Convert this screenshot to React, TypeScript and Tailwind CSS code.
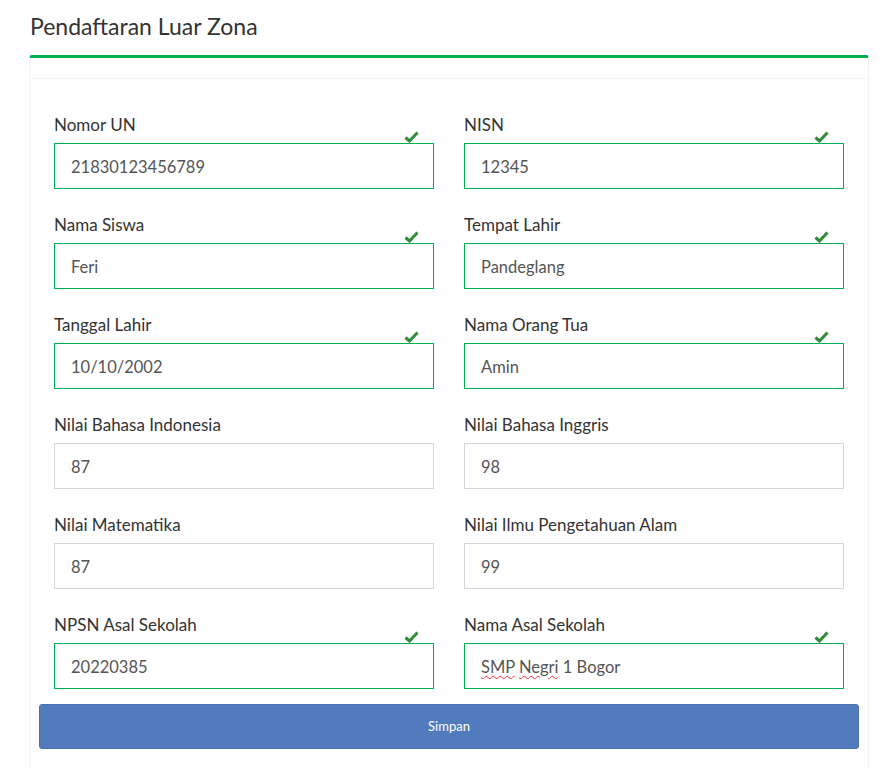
import React from "react";

type Field = {
  label: string;
  value: string;
  valid: boolean;
  spell?: boolean;
};

const fields: Field[] = [
  { label: "Nomor UN", value: "21830123456789", valid: true },
  { label: "NISN", value: "12345", valid: true },
  { label: "Nama Siswa", value: "Feri", valid: true },
  { label: "Tempat Lahir", value: "Pandeglang", valid: true },
  { label: "Tanggal Lahir", value: "10/10/2002", valid: true },
  { label: "Nama Orang Tua", value: "Amin", valid: true },
  { label: "Nilai Bahasa Indonesia", value: "87", valid: false },
  { label: "Nilai Bahasa Inggris", value: "98", valid: false },
  { label: "Nilai Matematika", value: "87", valid: false },
  { label: "Nilai Ilmu Pengetahuan Alam", value: "99", valid: false },
  { label: "NPSN Asal Sekolah", value: "20220385", valid: true },
  { label: "Nama Asal Sekolah", value: "SMP Negri 1 Bogor", valid: true, spell: true },
];

function Check() {
  return (
    <svg width="15" height="12" viewBox="0 0 15 12" className="absolute right-[15px] top-[-12px]">
      <path d="M1.5 6.5 L5.5 10 L13.5 1.5" fill="none" stroke="#2f8a3a" strokeWidth="3" strokeLinejoin="miter" />
    </svg>
  );
}

function SchoolName() {
  return (
    <span>
      <span className="underline decoration-wavy decoration-red-500 decoration-1 underline-offset-2">SMP</span>{" "}
      <span className="underline decoration-wavy decoration-red-500 decoration-1 underline-offset-2">Negri</span> 1 Bogor
    </span>
  );
}

function FormField({ field }: { field: Field }) {
  return (
    <div className="px-[15px] mb-[24px]">
      <label className="block text-[17px] leading-[24px] text-[#333] mb-[6px]">{field.label}</label>
      <div className="relative">
        {field.valid && <Check />}
        <div
          className={`h-[46px] border flex items-center px-[16px] pt-[2px] text-[16.5px] text-[#555] bg-white ${
            field.valid ? "border-[#00b050]" : "border-[#d2d6de]"
          }`}
        >
          {field.spell ? <SchoolName /> : field.value}
        </div>
      </div>
    </div>
  );
}

export default function App() {
  return (
    <div className="min-h-[768px] bg-white font-['Lato','Noto_Sans',sans-serif]">
      <h1 className="pl-[30px] pt-[11px] h-[55px] text-[23px] leading-[30px] text-[#333]">Pendaftaran Luar Zona</h1>
      <div className="ml-[29px] w-[840px] border-t-[3px] border-t-[#00b050] border-x border-x-[#f4f4f4] rounded-t-[3px]">
        <div className="h-[21px] border-b border-[#f4f4f4]" />
        <div className="pt-[34px] px-[9px] pb-[20px]">
          <div className="grid grid-cols-2">
            {fields.map((f) => (
              <FormField key={f.label} field={f} />
            ))}
          </div>
          <button className="mt-[-9px] w-full h-[45px] rounded-[3px] bg-[#527bbd] border border-[#4a70b0] text-white text-[13px]">
            Simpan
          </button>
        </div>
      </div>
    </div>
  );
}
